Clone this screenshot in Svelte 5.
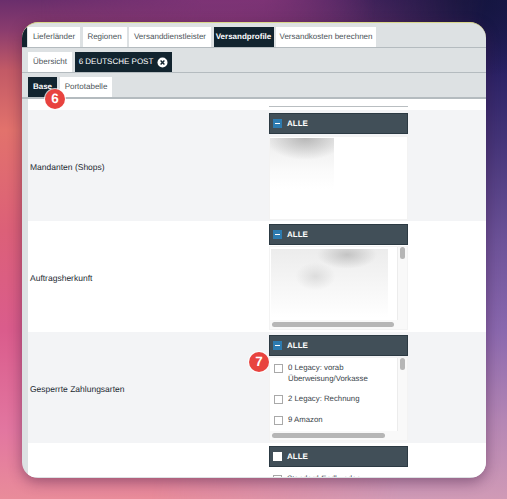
<script>
  const l1 = [
    { t: 'Lieferländer', w: 52 },
    { t: 'Regionen', w: 44 },
    { t: 'Versanddienstleister', w: 82 },
    { t: 'Versandprofile', w: 60, on: true, b: true },
    { t: 'Versandkosten berechnen', w: 100 }
  ];
</script>

<div class="page">
  <div class="card">
    <div class="bar b1">
      {#each l1 as tab}
        <div class="tab" class:on={tab.on} class:bold={tab.b} style="width:{tab.w}px">{tab.t}</div>
      {/each}
    </div>
    <div class="bar b2">
      <div class="tab" style="width:44px">Übersicht</div>
      <div class="tab on upper" style="width:97px">
        6 DEUTSCHE POST
        <svg width="11" height="11" viewBox="0 0 11 11"><circle cx="5.5" cy="5.5" r="5" fill="#fff" /><path d="M3.6 3.6l3.8 3.8M7.4 3.6l-3.8 3.8" stroke="#12242f" stroke-width="1.4" /></svg>
      </div>
    </div>
    <div class="bar b3">
      <div class="tab on bold" style="width:29px">Base</div>
      <div class="tab" style="width:52px">Portotabelle</div>
      <span class="badge b6">6</span>
    </div>

    <div class="content">
      <div class="top"><div class="rule"></div></div>

      <div class="row grey">
        <div class="label">Mandanten (Shops)</div>
        <div class="panel">
          <div class="head"><span class="chk minus"></span>ALLE</div>
          <div class="box plain"><div class="blur blur-a"></div></div>
        </div>
      </div>

      <div class="row">
        <div class="label">Auftragsherkunft</div>
        <div class="panel">
          <div class="head"><span class="chk minus"></span>ALLE</div>
          <div class="box scroll">
            <div class="list"><div class="blur blur-b"></div></div>
            <div class="vtrack"><span class="vthumb"></span></div>
            <div class="htrack"><span class="hthumb wide"></span></div>
          </div>
        </div>
      </div>

      <div class="row grey">
        <div class="label">Gesperrte Zahlungsarten</div>
        <div class="panel">
          <div class="head"><span class="chk minus"></span>ALLE</div>
          <div class="box scroll">
            <div class="list items">
              <div class="item"><span class="cb"></span><span>0 Legacy: vorab Überweisung/Vorkasse</span></div>
              <div class="item"><span class="cb"></span><span>2 Legacy: Rechnung</span></div>
              <div class="item"><span class="cb"></span><span>9 Amazon</span></div>
            </div>
            <div class="vtrack"><span class="vthumb"></span></div>
            <div class="htrack"><span class="hthumb"></span></div>
          </div>
          <span class="badge b7">7</span>
        </div>
      </div>

      <div class="row last">
        <div class="label"></div>
        <div class="panel">
          <div class="head"><span class="chk"></span>ALLE</div>
          <div class="list items tail">
            <div class="item"><span class="cb"></span><span>Standard-Endkunden</span></div>
          </div>
        </div>
      </div>
    </div>
  </div>
</div>

<style>
  :global(body) { margin: 0; }
  .page {
    width: 507px;
    height: 499px;
    padding: 22px 21px 21px 22px;
    box-sizing: border-box;
    overflow: hidden;
    position: relative;
    font-family: "Liberation Sans", Arial, sans-serif;
    text-rendering: geometricPrecision;
    background: linear-gradient(180deg, #6a2e6c 0, #8a3c6e 30px, #c25a66 70px, #e2726c 130px, #dc6078 230px, #da5c8c 330px, #e276a0 430px, #e98c9a 499px);
  }
  .page::before {
    content: "";
    position: absolute;
    inset: 0;
    background:
      radial-gradient(130px 80px at 90% 0, #12143c 0, rgba(18,20,60,0) 100%),
      linear-gradient(180deg, #1e1a52 0, #2a2164 70px, #443478 140px, #6c5298 240px, #8a68ae 330px, #b486b4 420px, #d09ab6 499px);
    -webkit-mask-image: linear-gradient(100deg, transparent 40%, #000 82%);
    mask-image: linear-gradient(100deg, transparent 40%, #000 82%);
  }
  .page::after {
    content: "";
    position: absolute;
    left: 0;
    top: 0;
    right: 0;
    height: 60px;
    background: linear-gradient(180deg, rgba(126,52,118,.95), rgba(126,52,118,0));
    -webkit-mask-image: linear-gradient(90deg, transparent 8%, #000 40%, #000 52%, transparent 74%);
    mask-image: linear-gradient(90deg, transparent 8%, #000 40%, #000 52%, transparent 74%);
  }
  .card {
    width: 464px;
    height: 456px;
    border-radius: 16px;
    overflow: hidden;
    background: #dde1e3;
    border-top: 1px solid #d8d68a;
    box-sizing: border-box;
    box-shadow: 0 4px 14px rgba(60, 20, 60, .45);
    position: relative;
    z-index: 1;
  }
  .bar {
    display: flex;
    gap: 3px;
    padding-left: 6px;
    border-bottom: 1px solid #b4bbbf;
    position: relative;
  }
  .b1 { height: 25px; padding-top: 4px; box-sizing: border-box; box-shadow: inset 5px 0 0 #12242f; gap: 2.5px; }
  .b2 { height: 25px; padding-top: 4px; box-sizing: border-box; }
  .b3 { height: 26px; padding-top: 4px; box-sizing: border-box; border-bottom-width: 2px; }
  .tab {
    background: #fff;
    color: #4b5358;
    font-size: 8px;
    height: 20px;
    line-height: 20px;
    text-align: center;
    white-space: nowrap;
    flex: none;
  }
  .tab.on { background: #12242f; color: #fff; }
  .tab.bold { font-weight: bold; }
  .upper { display: flex; align-items: center; justify-content: center; gap: 4px; font-size: 8px; }
  .content { background: #fff; margin-left: 6px; height: 378px; overflow: hidden; }
  .top { height: 11px; padding: 7px 0 0 241px; box-sizing: border-box; }
  .rule { width: 139px; height: 1px; background: #b9bec1; }
  .row { display: flex; height: 111px; padding-top: 3px; box-sizing: border-box; }
  .grey { background: #f3f4f6; }
  .label {
    width: 241px;
    flex: none;
    padding-left: 2px;
    box-sizing: border-box;
    align-self: center;
    font-size: 8.5px;
    color: #1d2a33;
  }
  .panel { width: 139px; position: relative; }
  .head {
    height: 21px;
    box-sizing: border-box;
    background: #414f58;
    border: 1px solid #2c3a43;
    color: #fff;
    font-size: 8px;
    font-weight: bold;
    display: flex;
    align-items: center;
    gap: 5px;
    padding-left: 3px;
  }
  .chk { width: 9px; height: 9px; background: #fff; display: flex; align-items: center; justify-content: center; }
  .chk.minus { background: #2d7bb0; }
  .chk.minus::after { content: ""; width: 5px; height: 1px; background: #fff; }
  .box { height: 84px; margin-top: 1px; box-sizing: border-box; border: 1px solid #f3f3f3; overflow: hidden; }
  .plain { background: #fff; margin-top: 2px; padding: 1px 0 0 0; }
  .scroll { display: grid; grid-template-columns: 1fr 9px; grid-template-rows: 1fr 9px; background: #f9f9f9; }
  .list { background: #fff; overflow: hidden; border-right: 1px solid #ececec; padding: 2px 0 0 1px; }
  .vtrack { padding: 0 2px; }
  .vthumb { display: block; width: 5px; height: 12px; border-radius: 3px; background: #b6b6b6; }
  .htrack { grid-column: 1 / 3; padding: 2px 2px; }
  .hthumb { display: block; width: 113px; height: 5px; border-radius: 3px; background: #b6b6b6; }
  .hthumb.wide { width: 122px; }
  .blur { height: 57px; }
  .blur-a {
    width: 64px;
    background:
      radial-gradient(40px 22px at 55% 0, rgba(170,170,170,.8), rgba(170,170,170,0)),
      linear-gradient(180deg, #ececec, #fbfbfb 60%, #fff 90%);
  }
  .blur-b {
    width: 117px;
    height: 72px;
    background:
      radial-gradient(30px 14px at 65% 8%, rgba(185,185,185,.8), rgba(185,185,185,0)),
      radial-gradient(20px 14px at 38% 38%, rgba(215,215,215,.8), rgba(215,215,215,0)),
      linear-gradient(180deg, #ececec 0, #f6f6f6 50%, #fff 95%);
  }
  .items { padding: 5px 4px 0 4px; }
  .item {
    display: grid;
    grid-template-columns: 9px 1fr;
    column-gap: 5px;
    font-size: 7.8px;
    line-height: 10.6px;
    color: #3a444b;
    margin-bottom: 10px;
  }
  .cb { width: 9px; height: 9px; border: 1px solid #a9a9a9; background: #fff; margin-top: 1px; box-sizing: border-box; }
  .tail { padding-top: 7px; border: 0; }
  .badge {
    position: absolute;
    width: 20px;
    height: 20px;
    border-radius: 50%;
    background: #e8433f;
    color: #fff;
    font-size: 13.5px;
    font-weight: bold;
    text-align: center;
    line-height: 20px;
    box-shadow: 0 0 0 1px rgba(255,255,255,.75);
  }
  .b6 { left: 23px; top: 16px; z-index: 2; }
  .b7 { left: -20px; top: 17px; }
</style>
